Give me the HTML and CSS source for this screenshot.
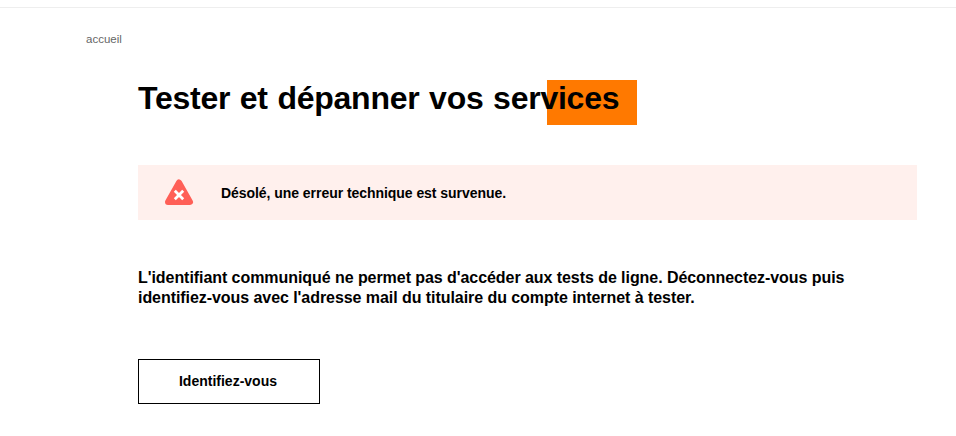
FILE: index.html
```html
<!DOCTYPE html>
<html lang="fr">
<head>
<meta charset="utf-8">
<title>Tester et dépanner vos services</title>
<link rel="stylesheet" href="styles.css">
</head>
<body>
<header class="topbar"></header>
<nav class="crumbs"><a href="#">accueil</a></nav>
<main class="content">
  <div class="title-wrap">
    <span class="accent"></span>
    <h1>Tester et dépanner vos services</h1>
  </div>
  <div class="alert">
    <svg class="alert-icon" width="30" height="28" viewBox="0 0 30 28" aria-hidden="true">
      <path d="M15 3.5 L26 23 H4 Z" fill="#ff5f57" stroke="#ff5f57" stroke-width="6" stroke-linejoin="round"/>
      <path d="M10.8 11.8 L19.2 20.2 M19.2 11.8 L10.8 20.2" stroke="#fff" stroke-width="2.8" fill="none"/>
    </svg>
    <p>Désolé, une erreur technique est survenue.</p>
  </div>
  <p class="message">L'identifiant communiqué ne permet pas d'accéder aux tests de ligne. Déconnectez-vous puis identifiez-vous avec l'adresse mail du titulaire du compte internet à tester.</p>
  <a class="button" href="#">Identifiez-vous</a>
</main>
</body>
</html>
```
FILE: styles.css
```css
* { box-sizing: border-box; }
html, body { margin: 0; padding: 0; }
body {
  background: #fff;
  color: #000;
  font-family: "Liberation Sans", Arial, sans-serif;
  overflow: hidden;
}
.topbar { height: 8px; border-bottom: 1px solid #eee; }
.crumbs { padding: 25px 0 0 86px; font-size: 11.5px; line-height: 13px; }
.crumbs a { color: #666; text-decoration: none; }
.content { padding: 0 39px 0 138px; }
.title-wrap { position: relative; margin-top: 34px; height: 45px; }
.accent {
  position: absolute;
  left: 409px;
  top: 0;
  width: 90px;
  height: 45px;
  background: #ff7900;
}
h1 {
  position: relative;
  margin: 0;
  font-size: 32px;
  line-height: 36px;
  font-weight: 700;
  letter-spacing: -0.25px;
  word-spacing: 1px;
}
.alert {
  display: flex;
  align-items: center;
  height: 55px;
  margin-top: 40px;
  padding-left: 26px;
  gap: 27px;
  background: #fff0ed;
}
.alert-icon { flex: none; }
.alert p { margin: 0; font-size: 14px; font-weight: 700; letter-spacing: -0.05px; }
.message {
  margin: 48px 0 0;
  max-width: 720px;
  font-size: 16px;
  line-height: 20px;
  font-weight: 700;
  letter-spacing: -0.06px;
}
.button {
  display: flex;
  align-items: center;
  justify-content: center;
  width: 182px;
  height: 45px;
  margin-top: 51px;
  padding: 0 2px 2px 0;
  border: 1px solid #000;
  color: #000;
  font-size: 14px;
  font-weight: 700;
  text-decoration: none;
}
```
